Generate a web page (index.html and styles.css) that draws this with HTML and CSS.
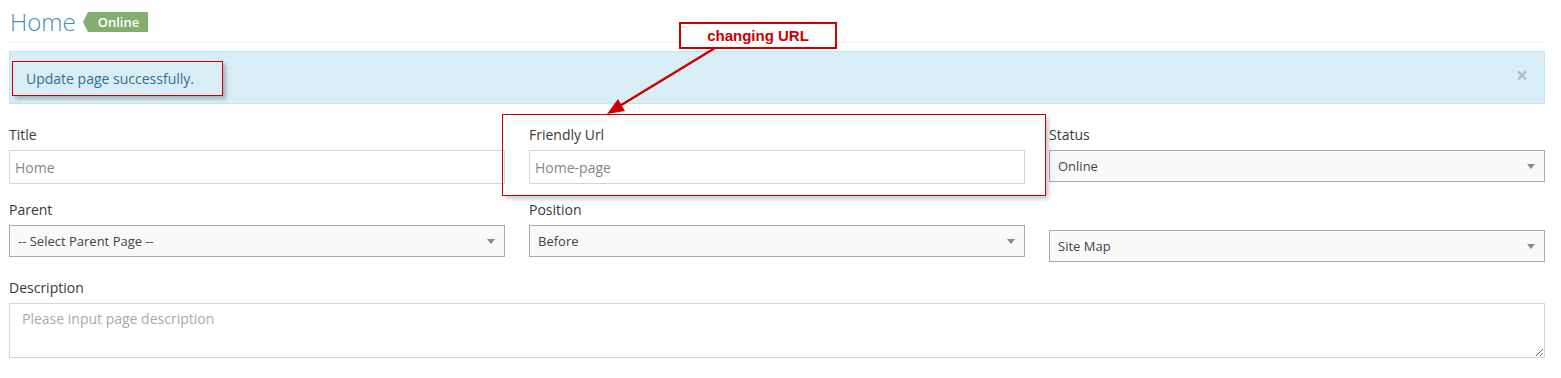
FILE: index.html
```html
<!DOCTYPE html>
<html lang="en">
<head>
    <meta charset="UTF-8">
    <title>Edit Page - Home</title>
    <link rel="stylesheet" href="styles.css">
</head>
<body>
    <div class="page">
        <div class="page-header">
            <h1>Home</h1>
            <span class="label-arrowed">Online</span>
        </div>

        <div class="alert">
            <span class="alert-text">Update page successfully.</span>
            <span class="close">&times;</span>
        </div>

        <form class="page-form">
            <div class="form-row">
                <div class="form-group">
                    <label>Title</label>
                    <input type="text" class="form-input" value="Home">
                </div>
                <div class="form-group">
                    <label>Friendly Url</label>
                    <input type="text" class="form-input" value="Home-page">
                </div>
                <div class="form-group">
                    <label>Status</label>
                    <div class="chosen"><span>Online</span><b></b></div>
                </div>
            </div>

            <div class="form-row">
                <div class="form-group">
                    <label>Parent</label>
                    <div class="chosen"><span>-- Select Parent Page --</span><b></b></div>
                </div>
                <div class="form-group">
                    <label>Position</label>
                    <div class="chosen"><span>Before</span><b></b></div>
                </div>
                <div class="form-group no-label">
                    <div class="chosen"><span>Site Map</span><b></b></div>
                </div>
            </div>

            <div class="form-group">
                <label>Description</label>
                <textarea class="form-textarea" placeholder="Please input page description"></textarea>
            </div>
        </form>

        <!-- annotations drawn over the screenshot -->
        <div class="note-box">changing URL</div>
        <svg class="note-arrow" width="130" height="80" viewBox="0 0 130 80">
            <line x1="119" y1="2" x2="22" y2="61" stroke="#cc0000" stroke-width="2.5"/>
            <polygon points="11,68 22,53 29,65" fill="#cc0000"/>
        </svg>
        <div class="note-frame"></div>
    </div>
</body>
</html>
```

FILE: styles.css
```css
body {
    margin: 0;
    font-family: "Open Sans", Arial, sans-serif;
    font-size: 14px;
    color: #393939;
    background-color: #fff;
}

.page {
    position: relative;
    padding: 0 16px 20px 9px;
}

.page-header {
    display: flex;
    align-items: center;
    padding: 5px 0 4px 1px;
    border-bottom: 1px dotted #e2e2e2;
}

.page-header h1 {
    margin: 0;
    font-size: 24px;
    font-weight: 300;
    line-height: 33px;
    color: #438eb9;
}

.label-arrowed {
    position: relative;
    margin-left: 12px;
    padding: 0 9px 0 10px;
    height: 20px;
    line-height: 20px;
    font-size: 13px;
    font-weight: 600;
    color: #fff;
    background-color: #82af6f;
}

.label-arrowed::before {
    content: "";
    position: absolute;
    left: -5px;
    top: 0;
    border-style: solid;
    border-width: 10px 5px 10px 0;
    border-color: transparent #82af6f transparent transparent;
}

.alert {
    display: flex;
    align-items: flex-start;
    justify-content: space-between;
    margin-top: 8px;
    padding: 9px 16px 0 2px;
    box-sizing: border-box;
    height: 53px;
    background-color: #d9edf7;
    border: 1px solid #bce8f1;
    color: #31708f;
}

.alert-text {
    display: inline-block;
    padding: 7px 28px 7px 13px;
    line-height: 19px;
    border: 1px solid #cc0000;
    box-shadow: 3px 3px 4px rgba(0, 0, 0, 0.25);
}

.close {
    margin-top: 4px;
    font-size: 21px;
    font-weight: bold;
    line-height: 20px;
    color: #000;
    opacity: 0.2;
}

.page-form {
    margin-top: 21px;
}

.form-row {
    display: grid;
    grid-template-columns: repeat(3, 1fr);
    column-gap: 24px;
    margin-bottom: 16px;
}

.form-group label {
    display: block;
    line-height: 20px;
    margin-bottom: 5px;
}

.no-label {
    padding-top: 30px;
}

.form-input,
.form-textarea {
    display: block;
    width: 100%;
    box-sizing: border-box;
    border: 1px solid #d5d5d5;
    font-family: "Open Sans", Arial, sans-serif;
    font-size: 14px;
    color: #858585;
    background-color: #fff;
}

.form-input {
    height: 34px;
    padding: 0 5px;
}

.form-textarea {
    height: 55px;
    padding: 5px 12px;
    resize: vertical;
}

.form-textarea::placeholder {
    color: #aaa;
}

.chosen {
    display: flex;
    align-items: center;
    justify-content: space-between;
    height: 32px;
    box-sizing: border-box;
    padding: 0 8px;
    border: 1px solid #aaa;
    background-color: #f9f9f9;
    font-size: 13px;
    color: #444;
}

.chosen b {
    width: 0;
    height: 0;
    border-style: solid;
    border-width: 5px 4px 0 4px;
    border-color: #888 transparent transparent transparent;
    margin-right: 1px;
}

.note-box {
    position: absolute;
    left: 679px;
    top: 22px;
    width: 154px;
    height: 23px;
    line-height: 23px;
    text-align: center;
    border: 2px solid #cc0000;
    background-color: #fff;
    font-family: "Liberation Sans", Arial, sans-serif;
    font-size: 15px;
    font-weight: bold;
    color: #cc0000;
}

.note-arrow {
    position: absolute;
    left: 596px;
    top: 46px;
}

.note-frame {
    position: absolute;
    left: 502px;
    top: 114px;
    width: 542px;
    height: 80px;
    border: 1px solid #cc0000;
    box-shadow: 3px 3px 4px rgba(0, 0, 0, 0.2);
    pointer-events: none;
}
```
